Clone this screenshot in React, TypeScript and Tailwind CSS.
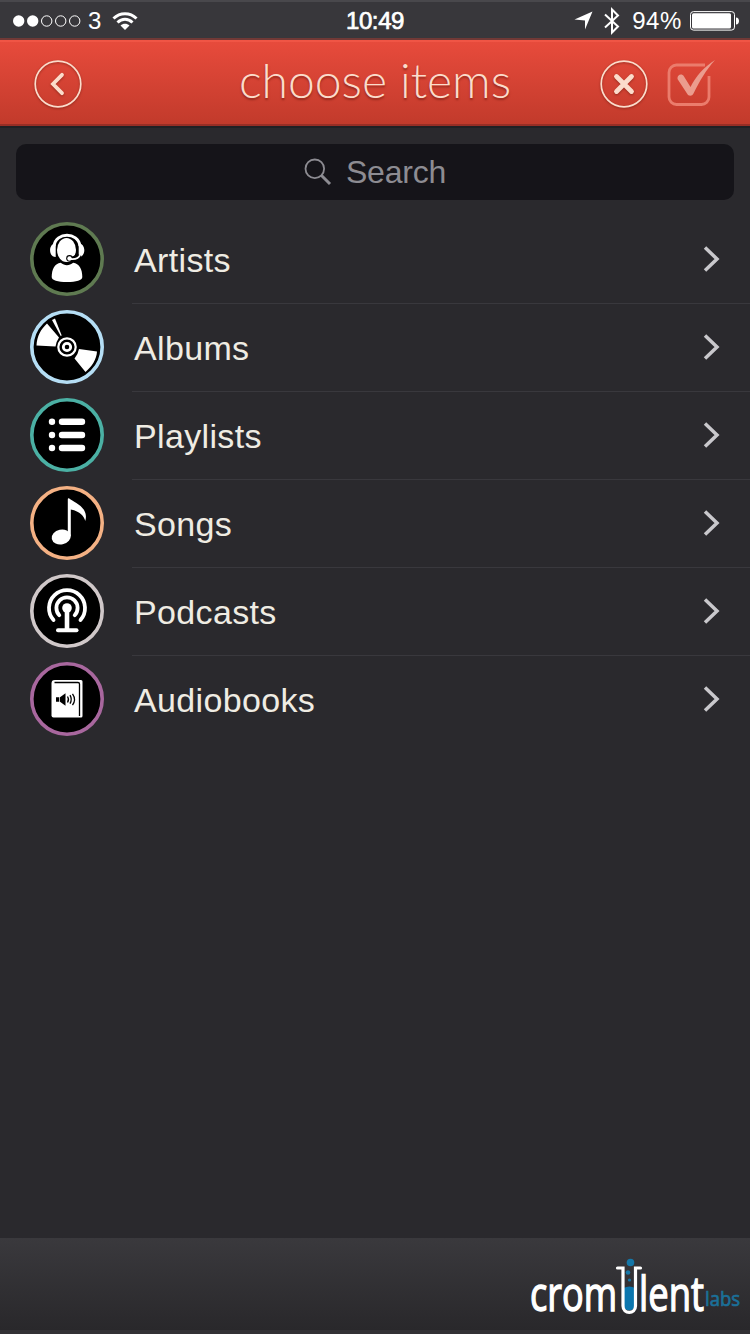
import type { ReactNode } from "react";

type Item = {
  label: string;
  ring: string;
  icon: ReactNode;
};

// All category icons are drawn on a 74x74 canvas, same as the round badge
const artistIcon = (
  <>
    <path d="M21.700 55c0-8 3-13.500 9-14.300 4 3.300 8.500 3.300 12.500 0 6 .800 9.100 6.300 9.100 14.300 0 3.500-6 5-15.300 5S21.700 58.500 21.700 55z" fill="#fff" />
    <ellipse cx="36.500" cy="28" rx="9.500" ry="12" fill="#fff" />
    <path d="M24 24C26 9.500 48 9.500 50 24" fill="none" stroke="#fff" strokeWidth="3" />
    <path d="M25.700 21.500v13.500c-7.500 0-7.500-13.500 0-13.500zM48.700 21.500v13.500c7.500 0 7.500-13.500 0-13.500z" fill="#fff" />
    <path d="M47 22v6c0 5-2 7-5 7.500" fill="none" stroke="#000" strokeWidth="1.600" />
    <circle cx="39.500" cy="36.200" r="3.300" fill="#000" />
    <path d="M49.500 33c-1 3-4 4.500-9 4" fill="none" stroke="#000" strokeWidth="4" />
    <path d="M50 33c-1 3-4 4.500-9.500 4" fill="none" stroke="#fff" strokeWidth="1.800" />
    <circle cx="39.500" cy="36.500" r="2.200" fill="#fff" />
  </>
);

const albumIcon = (
  <>
    <path d="M17 13.500 29 27.500Q26.500 31 25.500 36.500L6.500 35.500C7 26 11 19 17 13.500z" fill="#fff" />
    <path d="M22 10l3-1.500L31.700 25.500l-1 .500z" fill="#fff" />
    <path d="M49 39l18 2.500c-.500 8-5 15-11.500 20.500L44.500 48.500Q48 44.500 49 39z" fill="#fff" />
    <circle cx="37" cy="37" r="8.700" fill="none" stroke="#fff" strokeWidth="2.200" />
    <circle cx="37" cy="37" r="3.700" fill="none" stroke="#fff" strokeWidth="2.800" />
  </>
);

const playlistIcon = (
  <>
    <g fill="#fff">
      <circle cx="22" cy="23.800" r="3.200" />
      <circle cx="22" cy="37" r="3.200" />
      <circle cx="22" cy="50" r="3.200" />
    </g>
    <path d="M32 23.800h20M32 37h20M32 50h20" stroke="#fff" strokeWidth="6.400" strokeLinecap="round" />
  </>
);

const songIcon = (
  <>
    <path d="M37.800 13.500q0-2 1.500-1c3 2.500 11 5.500 14.700 11.500 2 3.500 2.500 7 1.300 11-1.300-5-5-9.500-14.500-11.500v27h-3z" fill="#fff" />
    <ellipse cx="31.200" cy="51" rx="9.600" ry="7.300" transform="rotate(-12 31.200 51)" fill="#fff" />
  </>
);

const podcastIcon = (
  <>
    <g fill="none" stroke="#fff" strokeWidth="3.800" strokeLinecap="round">
      <path d="M23.500 46A18 18 0 1 1 50.500 46" />
      <path d="M29.300 41.200A10.600 10.600 0 1 1 44.700 41.200" />
      <path d="M28 56.300h18.500" strokeWidth="4" />
    </g>
    <circle cx="37" cy="34" r="4.800" fill="#fff" />
    <path d="M37 34v22" stroke="#fff" strokeWidth="4.600" />
  </>
);

const audiobookIcon = (
  <>
    <path d="M21.500 21.500c0-2.500 1-3.500 3.500-3.500h26a1.500 1.500 0 0 1 1.500 1.500V54a1.500 1.500 0 0 1-1.500 1.500H23.500a2 2 0 0 1-2-2z" fill="#fff" />
    <path d="M24.500 20.500h23.500q1.500 0 1.500 1.500V54" fill="none" stroke="#000" strokeWidth="1.300" />
    <path d="M26 35.200h3.300v4.500H26zM30 35.200l5.500-4v12.500L30 39.700z" fill="#000" />
    <path d="M37.500 34.500q2 3 0 6M40 33.200q2.500 4.200 0 8.500M42.500 31.800q4 5.700 0 11.300" fill="none" stroke="#000" strokeWidth="1.300" />
  </>
);

const items: Item[] = [
  { label: "Artists", ring: "#5f7a51", icon: artistIcon },
  { label: "Albums", ring: "#b5def5", icon: albumIcon },
  { label: "Playlists", ring: "#4bb0a4", icon: playlistIcon },
  { label: "Songs", ring: "#f4b184", icon: songIcon },
  { label: "Podcasts", ring: "#d0c8c9", icon: podcastIcon },
  { label: "Audiobooks", ring: "#a8679e", icon: audiobookIcon },
];

function StatusBar() {
  return (
    <div className="grid h-[38px] grid-cols-[1fr_auto_1fr] items-center border-t-2 border-[#49484c] bg-[#38373b] pt-[1px] text-[24px] leading-none text-white">
      <div className="flex items-center pl-[12px]">
        <svg width="70" height="14" viewBox="0 0 70 14">
          <circle cx="6.700" cy="7" r="5.700" fill="#fff" />
          <circle cx="20.700" cy="7" r="5.700" fill="#fff" />
          <g fill="none" stroke="#fff" strokeWidth="1">
            <circle cx="34.700" cy="7" r="5.200" />
            <circle cx="48.700" cy="7" r="5.200" />
            <circle cx="62.700" cy="7" r="5.200" />
          </g>
        </svg>
        <span className="ml-[6px]">3</span>
        <svg className="ml-[11px]" width="26" height="20" viewBox="0 0 26 20">
          <path d="M1.500 7.500C8 1 18 1 24.500 7.500M5.500 11.500c4.500-4.300 10.500-4.300 15 0" fill="none" stroke="#fff" strokeWidth="3" />
          <path d="M8.500 14.500c2.500-2.500 6.500-2.500 9 0L13 19z" fill="#fff" />
        </svg>
      </div>
      <span className="tracking-[-0.400px] [-webkit-text-stroke:0.7px_#fff]">10:49</span>
      <div className="flex items-center justify-end pr-[11px]">
        <svg width="19" height="19" viewBox="0 0 19 19">
          <path d="M18.500.500 11 18.500V9.500L.500 8.500z" fill="#fff" />
        </svg>
        <svg className="ml-[10px]" width="18" height="28" viewBox="0 0 18 28">
          <path d="M2 7.500 15 19.500 9 25.500V2.500L15 8.500 2 20.500" fill="none" stroke="#fff" strokeWidth="2" />
        </svg>
        <span className="ml-[11px] tracking-[0.600px]">94%</span>
        <svg className="ml-[8px]" width="49" height="20" viewBox="0 0 49 20">
          <rect x=".500" y=".600" width="44" height="18.500" rx="3" fill="none" stroke="#fff" />
          <rect x="2" y="2.200" width="39" height="15.400" rx="1.500" fill="#fff" />
          <path d="M46 6.500c4 0 4 7 0 7z" fill="#fff" />
        </svg>
      </div>
    </div>
  );
}

function Header() {
  return (
    <header className="grid h-[90px] grid-cols-[1fr_auto_1fr] items-center border-t-2 border-b-2 border-t-[#713936] border-b-[#212024] bg-linear-to-b from-[#e84b3c] to-[#c13a2b] bg-clip-padding pt-[1px] shadow-[inset_0_2px_0_#f05545,inset_0_-2px_0_#982e25]">
      <button className="ml-[34px] w-[48px]" aria-label="Back">
        <svg width="48" height="48" viewBox="0 0 48 48" className="drop-shadow-[0_1px_1px_rgba(90,20,10,0.5)]">
          <circle cx="24" cy="24" r="22.800" fill="none" stroke="#fbdccb" strokeWidth="1.700" />
          <path d="M28 14.800 19 24l9 9.200" fill="none" stroke="#fbdccb" strokeWidth="3.800" strokeLinecap="round" />
        </svg>
      </button>
      <h1 className="pb-[8px] font-['Lato'] text-[48px] leading-none font-light text-[#fbdccb] [text-shadow:0_2px_2px_rgba(90,20,10,0.5)]">choose items</h1>
      <div className="flex items-center justify-end pr-[33px]">
        <button aria-label="Cancel">
          <svg width="48" height="48" viewBox="0 0 48 48" className="drop-shadow-[0_1px_1px_rgba(90,20,10,0.5)]">
            <circle cx="24" cy="24" r="22.800" fill="none" stroke="#fbdccb" strokeWidth="1.700" />
            <path d="M16.500 16.500l15 15M31.500 16.500l-15 15" fill="none" stroke="#fbdccb" strokeWidth="4.800" strokeLinecap="round" />
          </svg>
        </button>
        <button className="ml-[19px]" aria-label="Done">
          <svg width="50" height="48" viewBox="0 0 50 48">
            <path d="M38 5H9.500a7.500 7.500 0 0 0-7.500 7.500V37a7.500 7.500 0 0 0 7.500 7.500h25a7.500 7.500 0 0 0 7.500-7.500V16" fill="none" stroke="#eb7c6c" strokeWidth="2.800" />
            <path d="M10.500 19c-.500-4.500 4.500-6 6.500-2.500L23.500 27C29 16 37 7 48 0 39 10 33 20.500 26.500 33.500c-1.500 3-5 3-6.500 0z" fill="#eb9c8e" />
          </svg>
        </button>
      </div>
    </header>
  );
}

function Row({ item, last }: { item: Item; last: boolean }) {
  return (
    <li className="flex h-[88px] pl-[30px]">
      <svg className="mt-[6px] shrink-0" width="74" height="74" viewBox="0 0 74 74">
        <circle cx="37" cy="37" r="35.200" fill="#000" stroke={item.ring} strokeWidth="3.600" />
        {item.icon}
      </svg>
      <div className={`ml-[28px] flex flex-1 items-center justify-between border-b pr-[30px] pl-[2px] ${last ? "border-transparent" : "border-[#39383d]"}`}>
        <span className="pt-[2px] text-[34px] tracking-[0.350px] text-[#efece3]">{item.label}</span>
        <svg className="mb-[2px]" width="17" height="26" viewBox="0 0 17 26">
          <path d="M2 1.500 14 13 2 24.500" fill="none" stroke="#c9c8cc" strokeWidth="3.500" />
        </svg>
      </div>
    </li>
  );
}

function Logo() {
  return (
    <svg className="overflow-visible" width="214" height="74" viewBox="0 0 214 74" fontFamily="'Open Sans', sans-serif">
      <text x="2" y="55" fontSize="48" fill="#fff" stroke="#fff" strokeWidth="1.400" textLength="87" lengthAdjust="spacingAndGlyphs">crom</text>
      {/* the "u" is a test tube */}
      <path d="M95.500 32q6-3 11.500 0v17c0 7-11.500 7-11.500 0z" fill="#0b76ae" />
      <path d="M89.500 12h5.500v38c0 8.500 12.500 8.500 12.500 0V12h5" fill="none" stroke="#fff" strokeWidth="3.200" strokeLinecap="round" />
      <circle cx="102.500" cy="6.500" r="3.800" fill="#1577a8" />
      <circle cx="100" cy="16.500" r="2.300" fill="#1577a8" />
      <circle cx="101.500" cy="24" r="1.600" fill="#1577a8" />
      <text x="111" y="55" fontSize="48" fill="#fff" stroke="#fff" strokeWidth="1.400" textLength="65" lengthAdjust="spacingAndGlyphs">lent</text>
      <text x="177" y="50" fontSize="20" fill="#1b7099" stroke="#1b7099" strokeWidth=".700" textLength="35" lengthAdjust="spacingAndGlyphs">labs</text>
    </svg>
  );
}

export default function App() {
  return (
    <div className="flex h-[1334px] w-[750px] flex-col overflow-hidden bg-[#2a292d] font-['Liberation_Sans',Arial,sans-serif]">
      <StatusBar />
      <Header />
      <div className="mx-[16px] mt-[16px] flex h-[56px] items-center justify-center rounded-[10px] bg-[#151419] text-[32px] text-[#8d8c92]">
        <svg width="28" height="28" viewBox="0 0 28 28">
          <circle cx="10.800" cy="10.800" r="9.300" fill="none" stroke="#8d8c92" strokeWidth="1.800" />
          <path d="M17.500 17.500 26 26" stroke="#8d8c92" strokeWidth="3" />
        </svg>
        <span className="ml-[14px] tracking-[-0.200px]">Search</span>
      </div>
      <ul className="mt-[16px] flex-1">
        {items.map((item, i) => (
          <Row key={item.label} item={item} last={i === items.length - 1} />
        ))}
      </ul>
      <footer className="flex h-[96px] justify-end border-b-4 border-[#323135] bg-linear-to-b from-[#3a393d] to-[#29282b] pt-[18px] pr-[8px]">
        <Logo />
      </footer>
    </div>
  );
}
